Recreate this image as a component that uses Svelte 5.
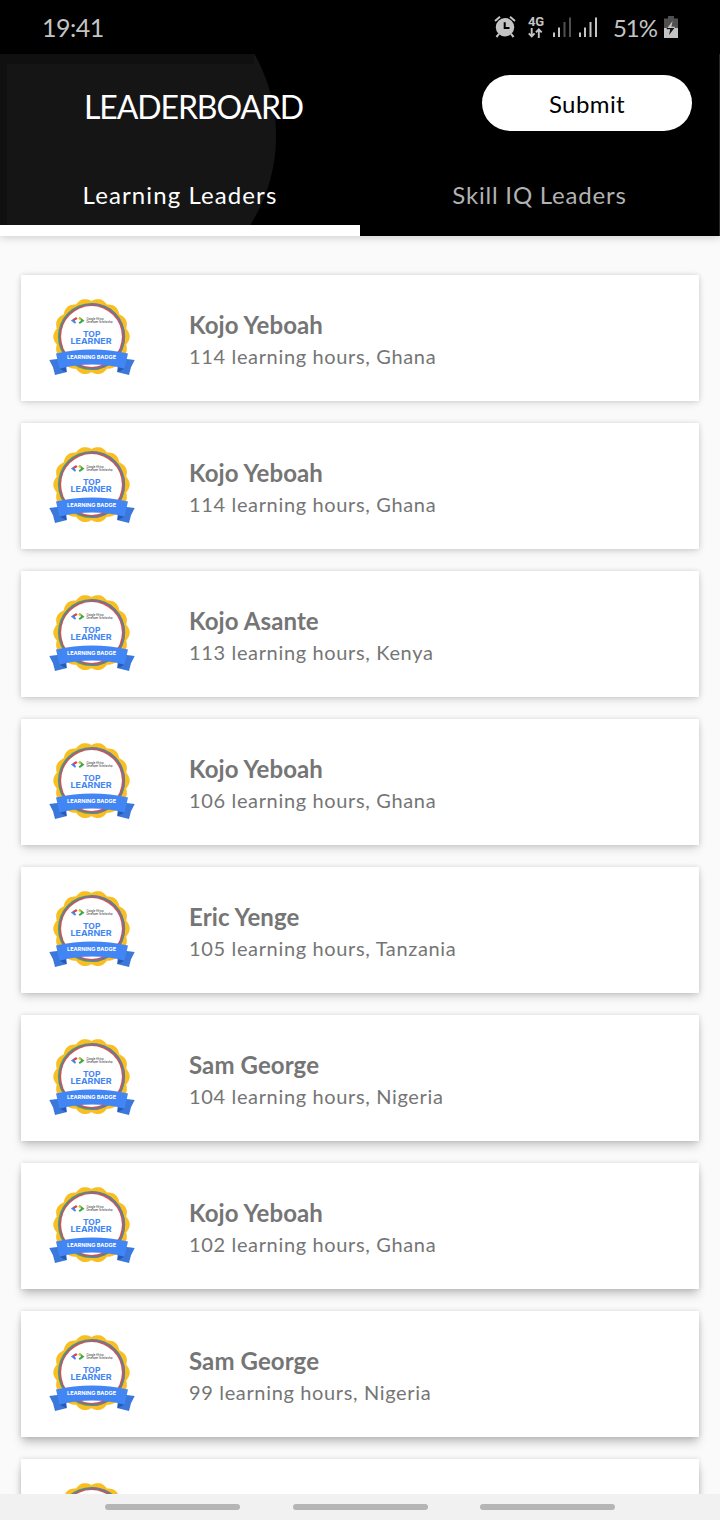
<script>
  const leaders = [
    { name: 'Kojo Yeboah', detail: '114 learning hours, Ghana' },
    { name: 'Kojo Yeboah', detail: '114 learning hours, Ghana' },
    { name: 'Kojo Asante', detail: '113 learning hours, Kenya' },
    { name: 'Kojo Yeboah', detail: '106 learning hours, Ghana' },
    { name: 'Eric Yenge', detail: '105 learning hours, Tanzania' },
    { name: 'Sam George', detail: '104 learning hours, Nigeria' },
    { name: 'Kojo Yeboah', detail: '102 learning hours, Ghana' },
    { name: 'Sam George', detail: '99 learning hours, Nigeria' },
    null
  ];

  // Scalloped outline of the badge: rounded lobes around the centre.
  const lobes = 14;
  const points = [];
  for (let i = 0; i < 336; i++) {
    const a = (i / 336) * Math.PI * 2;
    const r = 35.6 + 2.6 * Math.abs(Math.cos((lobes * a) / 2));
    const t = a + Math.PI / lobes;
    points.push(`${(42.5 + r * Math.sin(t)).toFixed(2)},${(39.6 - r * Math.cos(t)).toFixed(2)}`);
  }
  const scallop = `M${points.join('L')}Z`;
</script>

<div class="screen">
  <header>
    <div class="status">
      <span class="clock">19:41</span>
      <div class="indicators">
        <svg class="alarm" width="22" height="22" viewBox="0 0 22 22">
          <path d="M1 5L6 .8M21 5L16 .8M5 17.8L2.4 21M17 17.8L19.6 21" stroke="#c4c4c4" stroke-width="2" fill="none" />
          <circle cx="11" cy="11.3" r="9.2" fill="#c4c4c4" />
          <path d="M10.7 6.2v5.9h4.8" stroke="#000" stroke-width="2" fill="none" />
        </svg>
        <div class="network">
          <span>4G</span>
          <svg width="15" height="10" viewBox="0 0 15 10">
            <path d="M3.7 0v8M.8 5.3l2.9 3 2.9-3M10.8 10V2M7.9 4.4l2.9-3 2.9 3" stroke="#c4c4c4" stroke-width="1.9" fill="none" />
          </svg>
        </div>
        <svg class="signal first" width="19" height="21" viewBox="0 0 19 21">
          <path d="M1 15.5V20M6 10.5V20" stroke="#c4c4c4" stroke-width="2" />
          <path d="M11.5 5V20M17 .5V20" stroke="#505050" stroke-width="2" />
        </svg>
        <svg class="signal" width="19" height="21" viewBox="0 0 19 21">
          <path d="M1 15.5V20M6 10.5V20M11.5 5V20M17 .5V20" stroke="#c4c4c4" stroke-width="2" />
        </svg>
        <span class="percent">51%</span>
        <svg class="battery" width="14" height="22" viewBox="0 0 14 22">
          <path d="M0 2.5h4V0h6v2.5h4V12H0z" fill="#505050" />
          <path d="M0 12h14v10H0z" fill="#c4c4c4" />
          <path d="M8.6 5L3 12.5h3.6l-1.6 6.5 6.2-8.2H7.4z" fill="#c4c4c4" />
          <path d="M6.8 12h3.6L5 19l1.3-5.8H2.8V12z" fill="#111" />
        </svg>
      </div>
    </div>
    <div class="banner">
      <div class="toolbar">
        <h1>LEADERBOARD</h1>
        <button>Submit</button>
      </div>
      <nav>
        <div class="tab active"><span>Learning Leaders</span></div>
        <div class="tab skill"><span>Skill IQ Leaders</span></div>
      </nav>
    </div>
  </header>

  <main>
    {#each leaders as leader, i}
      <article style:--depth="{3 + i * 0.6}px" style:--shade={0.1 + i * 0.018}>
        <svg class="badge" width="86" height="80" viewBox="0 0 86 80">
          <path d={scallop} fill="#f9be22" />
          <circle cx="42.5" cy="39.5" r="33.6" fill="#57946f" />
          <path d="M42.5 5.9A33.6 33.6 0 0 1 42.5 73.1z" fill="#6f7c88" />
          <circle cx="42.5" cy="39.5" r="32.2" fill="#5b79bd" />
          <circle cx="42.5" cy="39.5" r="31.6" fill="#db5048" />
          <circle cx="42.5" cy="39.5" r="30.4" fill="#fff" />
          {#if leader}
            <path d="M27.2 21.2L23.6 23.6 26.6 26" stroke="#4285f4" stroke-width="2" fill="none" />
            <path d="M28 21L24.6 23.2" stroke="#ea4335" stroke-width="2" />
            <path d="M30.2 20.8L33.8 23.6 30.2 26.2" stroke="#34a853" stroke-width="2" fill="none" />
            <path d="M29.8 21.2L32 22.6" stroke="#fbbc04" stroke-width="1.6" />
            <text x="37.5" y="22.7" font-size="3.4" fill="#222" textLength="17" lengthAdjust="spacingAndGlyphs">Google Africa</text>
            <text x="37.5" y="26" font-size="3" fill="#222" textLength="26" lengthAdjust="spacingAndGlyphs">Developer Scholarship</text>
            <text class="bold" x="42.7" y="39.7" font-size="8.2" text-anchor="middle" textLength="17.5" lengthAdjust="spacingAndGlyphs">TOP</text>
            <text class="bold" x="42" y="47.2" font-size="8.2" text-anchor="middle" textLength="41" lengthAdjust="spacingAndGlyphs">LEARNER</text>
            <path d="M.3 63L16 61 18 75 6 78 4 70.3z M85.7 63L70 61 68 75 80 78 82 70.3z" fill="#3b78dc" />
            <path d="M10.5 71.5L17 75.3V69z M75.5 71.5L69 75.3V69z" fill="#2859b5" />
            <path d="M7 56.5Q43 48.5 79 56.5L75.5 71.7Q43 63.5 10.5 71.7z" fill="#4285f4" />
            <text class="ribbon" x="42.5" y="61.9" font-size="5.3" text-anchor="middle" textLength="49" lengthAdjust="spacingAndGlyphs">LEARNING BADGE</text>
          {/if}
        </svg>
        {#if leader}
          <div class="info">
            <h2>{leader.name}</h2>
            <p>{leader.detail}</p>
          </div>
        {/if}
      </article>
    {/each}
  </main>

  <footer><i></i><i></i><i></i></footer>
</div>

<style>
  :global(body) { margin: 0; overflow: hidden; }
  .screen {
    width: 720px; height: 1520px; overflow: hidden;
    display: flex; flex-direction: column;
    background: #fafafa; font-family: Lato, sans-serif;
  }
  header { flex: none; height: 236px; background: #000; position: relative; z-index: 1; box-shadow: 0 1px 9px rgba(0, 0, 0, .2); }
  .status { height: 54px; display: flex; align-items: center; justify-content: space-between; padding: 0 42px 0 42px; box-sizing: border-box; color: #c4c4c4; }
  .clock { font-size: 25px; letter-spacing: -.5px; line-height: 54px; }
  .indicators { display: flex; align-items: center; }
  .network { width: 16px; margin-left: 12px; display: flex; flex-direction: column; align-items: center; }
  .network span { font: bold 13px/12px Roboto, sans-serif; letter-spacing: -.3px; }
  .signal { margin-top: 1px; }
  .first { margin: 1px 7px 0 9px; }
  .percent { margin: 0 7px 0 15px; font-size: 24px; letter-spacing: -1px; }
  .banner {
    height: 182px; display: flex; flex-direction: column; box-sizing: border-box; border-right: 1px solid #282828;
    background:
      linear-gradient(#101010, #101010) 0 0 / 7px 171px no-repeat,
      linear-gradient(#101010, #101010) 0 0 / 254px 10px no-repeat,
      radial-gradient(circle at 110px 82px, #151515 165.5px, #000 166.5px);
  }
  .toolbar { height: 101px; display: flex; align-items: center; justify-content: space-between; padding: 0 27px 0 84px; }
  h1 { margin: 4px 0 0; color: #fff; font-weight: 400; font-size: 32px; line-height: 40px; letter-spacing: -1.1px; }
  button { width: 210px; height: 56px; margin-top: -3px; padding: 0; border: 0; border-radius: 28px; background: #fff; color: #000; font: 24px Lato, sans-serif; letter-spacing: .4px; }
  nav { flex: 1; display: grid; grid-template-columns: 360px 359px; }
  .tab { display: flex; justify-content: center; padding-top: 24px; box-sizing: border-box; color: #b2b2b2; font-size: 24px; line-height: 32px; letter-spacing: 1.1px; }
  .skill { letter-spacing: .8px; }
  .active { color: #fff; border-bottom: 11px solid #fff; }
  main { flex: 1; min-height: 0; overflow: hidden; display: flex; flex-direction: column; gap: 22px; padding: 39px 21px 0; }
  article {
    flex: none; height: 126px; box-sizing: border-box; padding: 22px 28px; display: flex; gap: 54px;
    background: #fff; box-shadow: 0 var(--depth) 9px -1px rgba(0, 0, 0, var(--shade)), 0 0 5px rgba(0, 0, 0, .14);
  }
  .badge { flex: none; font-family: Inter, sans-serif; }
  .bold { font-weight: 700; fill: #4285f4; }
  .ribbon { font-weight: 700; fill: #fff; }
  .info { padding-top: 12px; color: #757575; }
  h2 { margin: 0; font-size: 24px; line-height: 32px; font-weight: 700; letter-spacing: .1px; }
  p { margin: -1px 0 0; font-size: 20px; line-height: 32px; letter-spacing: .65px; }
  footer { flex: none; position: relative; height: 26px; display: flex; justify-content: center; align-items: center; gap: 52.5px; background: #f1f1f1; }
  i { width: 135px; height: 6.5px; border-radius: 4px; background: #b5b5b5; }
</style>
